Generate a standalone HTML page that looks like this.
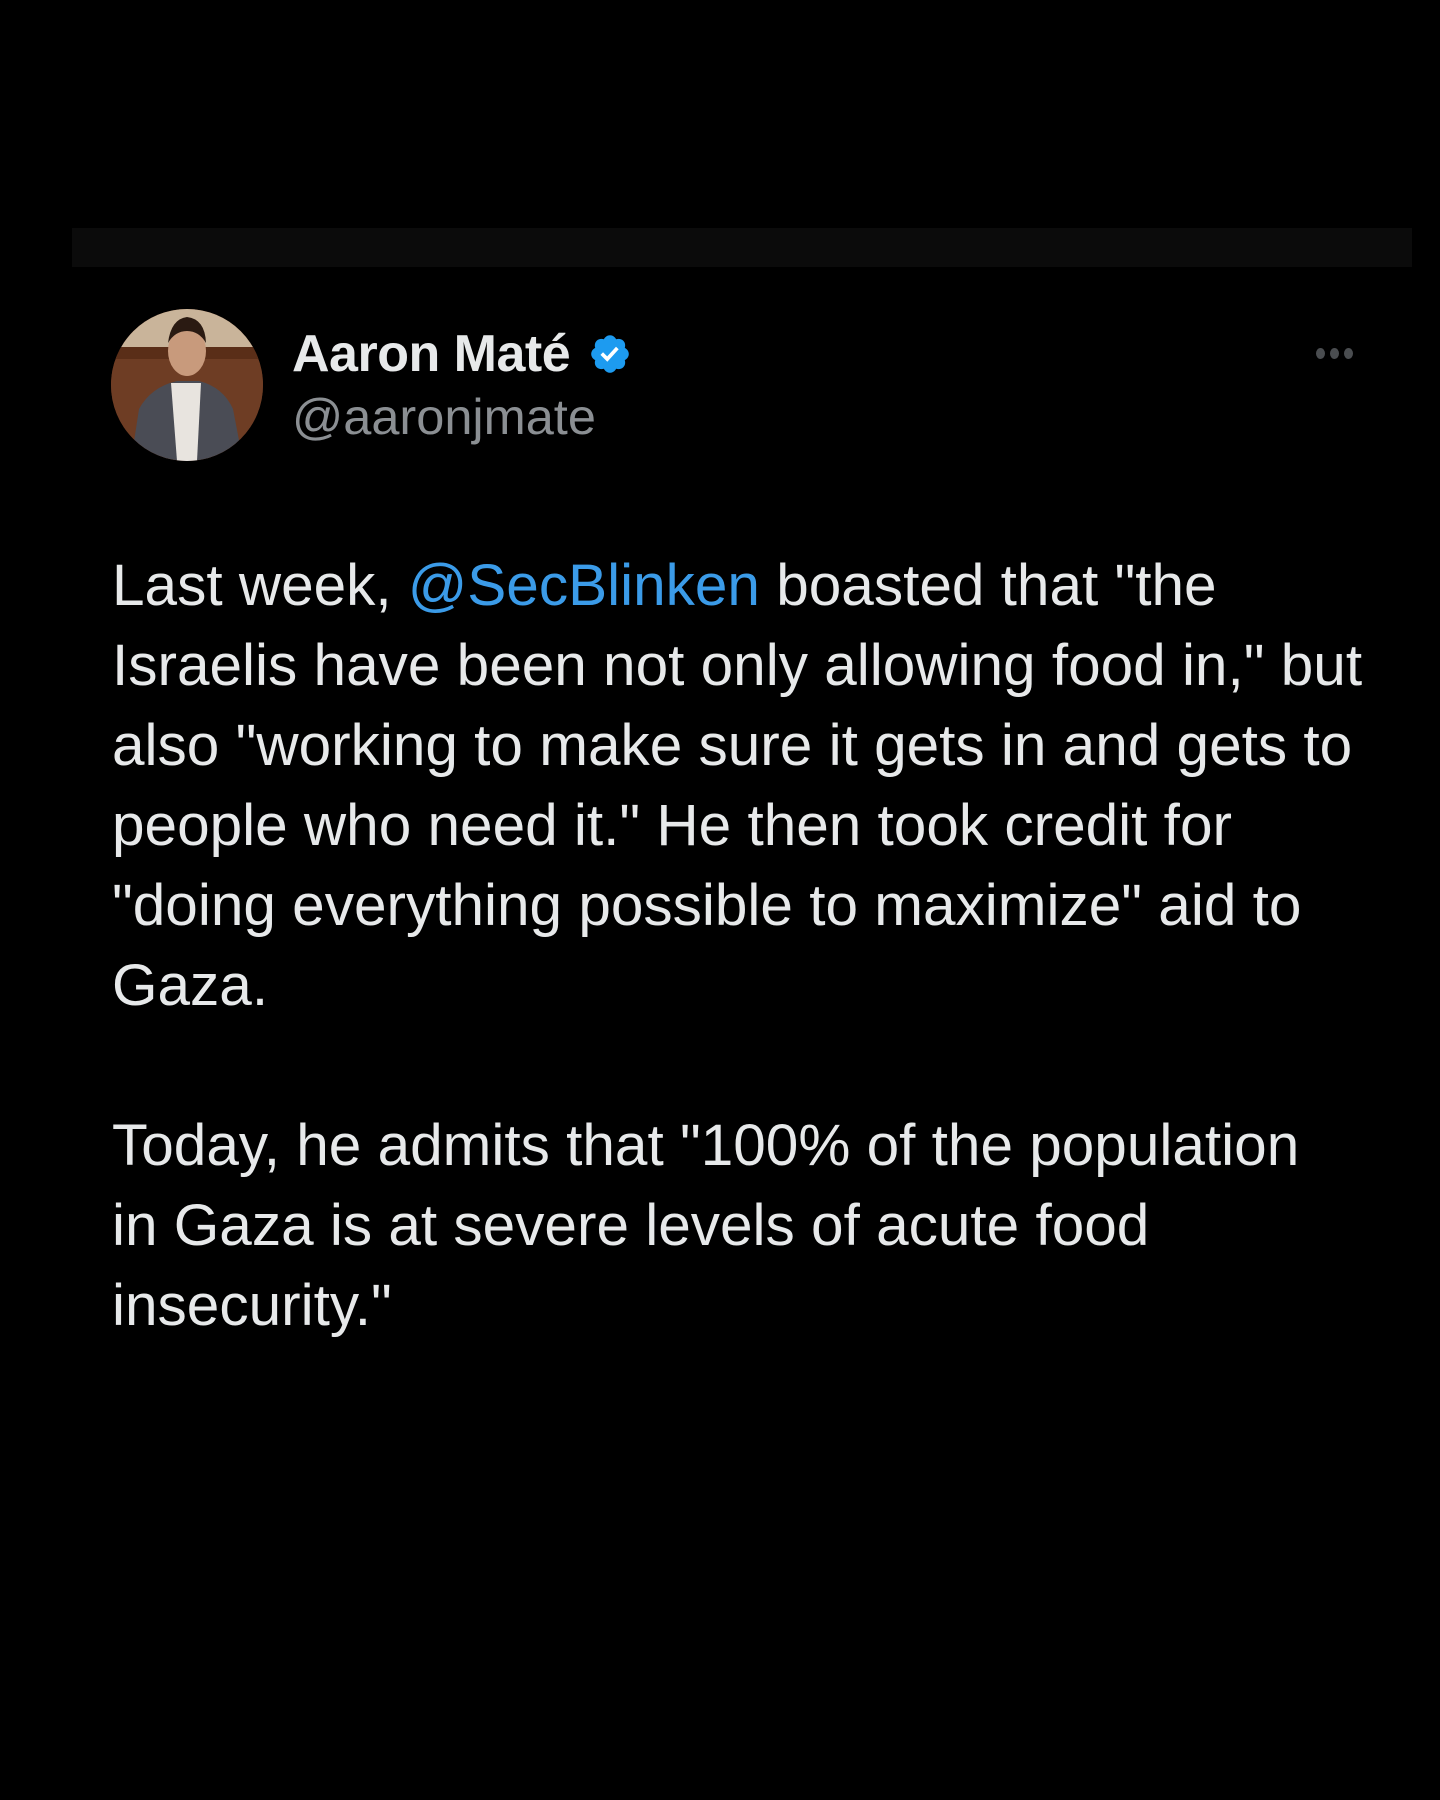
<!DOCTYPE html>
<html><head><meta charset="utf-8"><style>
html,body{margin:0;padding:0;background:#000;width:1440px;height:1800px;overflow:hidden;font-family:"Liberation Sans",sans-serif;}
.bar{position:absolute;left:72px;top:228px;width:1340px;height:39px;background:#0b0b0b;}
.av{position:absolute;left:111px;top:309px;width:152px;height:152px;border-radius:50%;overflow:hidden;background:#6a3a22;}
.name{position:absolute;left:292px;top:324px;font-size:52px;line-height:60px;font-weight:bold;color:#e7e9ea;letter-spacing:-0.5px;}
.handle{position:absolute;left:292px;top:388px;font-size:50.5px;line-height:58px;color:#8b8f93;}
.dots{position:absolute;left:1316px;top:346px;}
.dots span{display:inline-block;width:9px;height:11px;border-radius:50%;background:#4a4d50;margin-right:5px;}
.txt{position:absolute;left:112px;top:546px;width:1320px;font-size:58.5px;line-height:80px;color:#e7e9ea;white-space:pre;}
.lnk{color:#3b9be8;}
</style></head><body>
<div class="bar"></div>
<div class="av">
<svg width="152" height="152" viewBox="0 0 152 152">
<rect width="152" height="152" fill="#6e3d24"/>
<rect x="0" y="0" width="152" height="38" fill="#c9b49a"/>
<rect x="0" y="38" width="152" height="12" fill="#5a2e18"/>
<path d="M20 152 L28 100 Q40 78 66 72 L88 72 Q112 78 122 100 L132 152Z" fill="#4a4c55"/>
<path d="M60 74 L90 74 L86 152 L66 152Z" fill="#e8e4df"/>
<ellipse cx="76" cy="42" rx="19" ry="25" fill="#c89a7c"/>
<path d="M57 34 Q60 10 76 8 Q94 10 95 34 Q88 22 76 22 Q64 22 57 34Z" fill="#2a1a12"/>
</svg>
</div>
<div class="name">Aaron Maté</div>
<svg style="position:absolute;left:588px;top:332px" width="44" height="44" viewBox="0 0 24 24"><path fill="#1d9bf0" d="M22.25 12c0-1.43-.88-2.670-2.190-3.34.46-1.39.2-2.9-.81-3.91s-2.52-1.27-3.910-.81c-.66-1.31-1.910-2.19-3.34-2.19s-2.67.88-3.33 2.19c-1.4-.46-2.91-.2-3.92.81s-1.26 2.52-.8 3.91c-1.31.67-2.2 1.91-2.2 3.34s.89 2.67 2.2 3.34c-.46 1.39-.21 2.9.8 3.91s2.52 1.26 3.91.81c.67 1.31 1.91 2.19 3.34 2.19s2.68-.88 3.34-2.19c1.39.45 2.9.2 3.91-.81s1.27-2.52.81-3.91c1.31-.67 2.19-1.91 2.19-3.34z"/><path fill="#fff" d="M10.54 16.2l-3.74-3.74 1.41-1.42 2.26 2.26 4.8-5.23 1.47 1.36z"/></svg>
<div class="handle">@aaronjmate</div>
<div class="dots"><span></span><span></span><span></span></div>
<div class="txt">Last week, <span class="lnk">@SecBlinken</span> boasted that "the
Israelis have been not only allowing food in," but
also "working to make sure it gets in and gets to
people who need it." He then took credit for
"doing everything possible to maximize" aid to
Gaza.

Today, he admits that "100% of the population
in Gaza is at severe levels of acute food
insecurity."</div>
</body></html>
